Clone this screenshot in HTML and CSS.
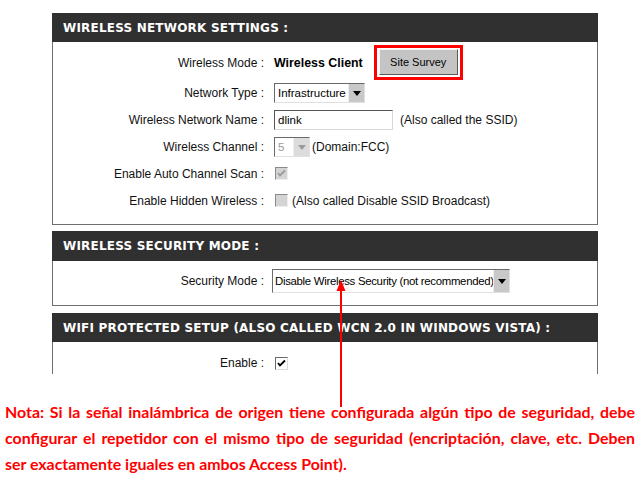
FILE: index.html
```html
<!DOCTYPE html>
<html lang="es">
<head>
    <meta charset="UTF-8">
    <title>Wireless Settings</title>
    <link rel="stylesheet" href="styles.css">
</head>
<body>
    <div class="page">
        <section class="panel">
            <h2 class="panel-title">WIRELESS NETWORK SETTINGS :</h2>
            <div class="panel-body body-network">
                <div class="form-row row-tall">
                    <span class="label">Wireless Mode :</span>
                    <div class="field">
                        <strong class="mode-value">Wireless Client</strong>
                        <span class="highlight"><span class="btn">Site Survey</span></span>
                    </div>
                </div>
                <div class="form-row">
                    <span class="label">Network Type :</span>
                    <div class="field">
                        <span class="select select-type">
                            <span class="select-text">Infrastructure</span>
                            <span class="select-arrow"></span>
                        </span>
                    </div>
                </div>
                <div class="form-row">
                    <span class="label">Wireless Network Name :</span>
                    <div class="field">
                        <span class="textbox">dlink</span>
                        <span class="hint hint-ssid">(Also called the SSID)</span>
                    </div>
                </div>
                <div class="form-row">
                    <span class="label">Wireless Channel :</span>
                    <div class="field">
                        <span class="select select-channel disabled">
                            <span class="select-text">5</span>
                            <span class="select-arrow"></span>
                        </span>
                        <span class="hint hint-domain">(Domain:FCC)</span>
                    </div>
                </div>
                <div class="form-row">
                    <span class="label">Enable Auto Channel Scan :</span>
                    <div class="field">
                        <span class="check disabled">
                            <svg viewBox="0 0 11 11" width="11" height="11"><path d="M2 5 L4 7.5 L9 2.5" fill="none" stroke="#9a9a9a" stroke-width="1.8"/></svg>
                        </span>
                    </div>
                </div>
                <div class="form-row">
                    <span class="label">Enable Hidden Wireless :</span>
                    <div class="field">
                        <span class="check disabled"></span>
                        <span class="hint hint-hidden">(Also called Disable SSID Broadcast)</span>
                    </div>
                </div>
            </div>
        </section>

        <section class="panel panel-security">
            <h2 class="panel-title title-tall">WIRELESS SECURITY MODE :</h2>
            <div class="panel-body body-security">
                <div class="form-row">
                    <span class="label">Security Mode :</span>
                    <div class="field">
                        <span class="select select-security">
                            <span class="select-text">Disable Wireless Security (not recommended)</span>
                            <span class="select-arrow"></span>
                        </span>
                    </div>
                </div>
            </div>
        </section>

        <section class="panel panel-open">
            <h2 class="panel-title">WIFI PROTECTED SETUP (ALSO CALLED WCN 2.0 IN WINDOWS VISTA) :</h2>
            <div class="panel-body body-wps">
                <div class="form-row row-short">
                    <span class="label">Enable :</span>
                    <div class="field">
                        <span class="check">
                            <svg viewBox="0 0 11 11" width="11" height="11"><path d="M2 5 L4 7.5 L9 2.5" fill="none" stroke="#000" stroke-width="1.8"/></svg>
                        </span>
                    </div>
                </div>
            </div>
        </section>

        <div class="note">
            <span class="note-line">Nota: Si la señal inalámbrica de origen tiene configurada algún tipo de seguridad, debe</span>
            <span class="note-line">configurar el repetidor con el mismo tipo de seguridad (encriptación, clave, etc. Deben</span>
            <span class="note-line last">ser exactamente iguales en ambos Access Point).</span>
        </div>

        <!-- arrow pointing at the security select -->
        <svg class="arrow" width="12" height="127" viewBox="0 0 12 127">
            <path d="M6 0 L10.5 11 L1.5 11 Z" fill="#f00"/>
            <rect x="5" y="8" width="2" height="119" fill="#f00"/>
        </svg>
    </div>
</body>
</html>
```

FILE: styles.css
```css
body, html {
    margin: 0;
    padding: 0;
    background: #fff;
}
body {
    font-family: "Liberation Sans", Arial, sans-serif;
    font-size: 12px;
    color: #000;
}
.page {
    position: relative;
    width: 640px;
    height: 478px;
    padding-top: 13px;
    box-sizing: border-box;
    overflow: hidden;
}
.panel {
    width: 546px;
    margin: 0 0 6px 52px;
    border: 1px solid #6f6f6f;
    border-top: none;
    box-sizing: border-box;
    background: #fff;
}
.panel-security {
    margin-bottom: 7px;
}
.panel-open {
    border-bottom: none;
}
.panel-title {
    margin: 0 -1px;
    height: 29px;
    line-height: 30px;
    padding-left: 11px;
    background: #303030;
    color: #fff;
    font-family: "DejaVu Sans", Verdana, sans-serif;
    font-weight: bold;
    font-size: 12px;
    letter-spacing: 0.2px;
    white-space: nowrap;
}
.title-tall {
    height: 30px;
}
.panel-body {
    box-sizing: border-box;
}
.body-network {
    padding: 3px 0 10px;
}
.body-security {
    padding: 6px 0 11px;
}
.body-wps {
    padding: 10px 0 0;
    height: 32px;
}
.form-row {
    display: grid;
    grid-template-columns: 211px 1fr;
    column-gap: 10px;
    align-items: center;
    height: 27px;
}
.row-tall {
    height: 34px;
}
.row-short {
    height: 22px;
}
.label {
    text-align: right;
    white-space: nowrap;
    color: #111;
}
.field {
    display: flex;
    align-items: center;
    white-space: nowrap;
    min-width: 0;
}
.mode-value {
    font-size: 12.4px;
    margin-right: 11px;
}
.highlight {
    display: inline-flex;
    padding: 1px 2px 2px;
    border: 3px solid #f00;
}
.btn {
    display: inline-block;
    width: 79px;
    height: 26px;
    line-height: 24px;
    box-sizing: border-box;
    text-align: center;
    font-size: 11px;
    background: #c4c4c4;
    border: 1px solid;
    border-color: #f4f4f4 #5a5a5a #5a5a5a #f4f4f4;
}
.select {
    display: inline-flex;
    align-items: stretch;
    height: 20px;
    box-sizing: border-box;
    border: 1px solid;
    border-color: #6a6a6a #e0e0e0 #e0e0e0 #6a6a6a;
    background: #fff;
}
.select-text {
    flex: 1;
    min-width: 0;
    overflow: hidden;
    padding: 0 3px;
    line-height: 18px;
    font-size: 11.5px;
}
.select-arrow {
    flex: none;
    width: 15px;
    background: #c8c8c8;
    border-left: 1px solid #eee;
    position: relative;
}
.select-arrow::after {
    content: "";
    position: absolute;
    left: 4px;
    top: 7px;
    border-left: 4px solid transparent;
    border-right: 4px solid transparent;
    border-top: 5px solid #000;
}
.select-type {
    width: 91px;
}
.select-channel {
    width: 36px;
}
.select-channel .select-text {
    color: #9a9a9a;
}
.select-channel .select-arrow {
    background: #dcdcdc;
}
.select-channel .select-arrow::after {
    border-top-color: #9a9a9a;
}
.select-security {
    width: 238px;
    height: 24px;
    margin-left: -2px;
}
.select-security .select-text {
    line-height: 22px;
    font-size: 11.4px;
    letter-spacing: -0.3px;
    padding-left: 2px;
}
.select-security .select-arrow::after {
    top: 9px;
}
.textbox {
    display: inline-block;
    width: 119px;
    height: 20px;
    line-height: 18px;
    padding: 0 3px;
    box-sizing: border-box;
    border: 1px solid;
    border-color: #555 #d8d8d8 #d8d8d8 #555;
    font-size: 11.5px;
}
.hint {
    color: #111;
}
.hint-ssid {
    margin-left: 7px;
}
.hint-domain {
    margin-left: 2px;
}
.hint-hidden {
    margin-left: 4px;
}
.check {
    display: inline-flex;
    align-items: center;
    justify-content: center;
    width: 13px;
    height: 13px;
    box-sizing: border-box;
    border: 1px solid;
    border-color: #6a6a6a #ddd #ddd #6a6a6a;
    background: #fff;
    margin-left: 1px;
}
.check.disabled {
    background: #d4d4d4;
    border-color: #8a8a8a #eee #eee #8a8a8a;
}
.note {
    margin-top: 25px;
    padding: 0 5px;
    font-family: Lato, "Open Sans", sans-serif;
    font-weight: bold;
    font-size: 15.9px;
    line-height: 26px;
    color: #f00;
}
.note-line {
    display: block;
    text-align: justify;
    text-align-last: justify;
    white-space: nowrap;
}
.note-line.last {
    text-align-last: left;
}
.arrow {
    position: absolute;
    left: 335px;
    top: 280px;
}
```
